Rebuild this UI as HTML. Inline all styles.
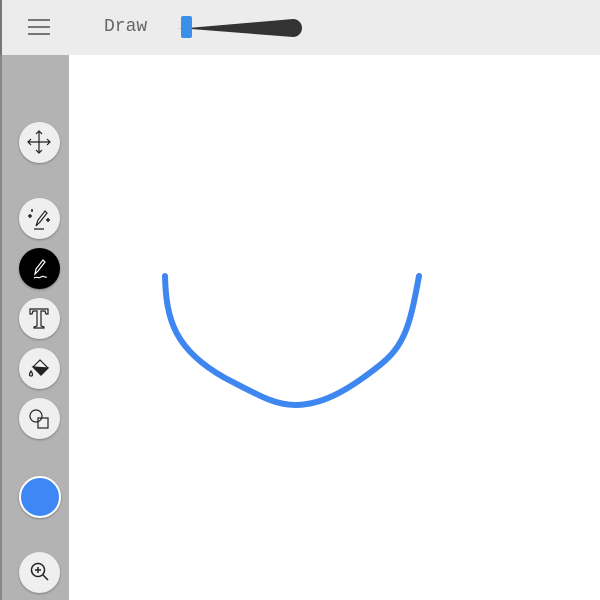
<!DOCTYPE html>
<html><head><style>
body{margin:0;width:600px;height:600px;overflow:hidden;background:#fff;font-family:"Liberation Mono",monospace;position:relative}
#top{position:absolute;left:0;top:0;width:600px;height:55px;background:#ececec;border-left:2px solid #777;box-sizing:border-box}
#side{position:absolute;left:0;top:55px;width:69px;height:545px;background:#b3b3b3;border-left:2px solid #888;box-sizing:border-box}
.b{position:absolute;left:19px;width:41px;height:41px;border-radius:50%;background:#efefef;box-shadow:0 1px 2px rgba(0,0,0,.3)}
.b svg{position:absolute;left:0;top:0}
</style></head><body>
<div id="top">
<div style="position:absolute;left:26px;top:19px;width:22px;height:2px;background:#777;box-shadow:0 7px 0 #777,0 14px 0 #777"></div>
<div style="position:absolute;left:102px;top:17px;font-size:18px;color:#666">Draw</div>
<svg style="position:absolute;left:0;top:0" width="320" height="55"><path d="M176 28 L186 28 L291 19 A9 9 0 0 1 291 37 Z" fill="#333"/><rect x="179" y="16" width="11" height="22" rx="2" fill="#3a8fe8"/></svg>
</div>
<div id="side"></div>
<div class="b" style="top:122px"><svg width="41" height="41" fill="none" stroke="#222" stroke-width="1.2"><path d="M20 9V31M9 20H31M17 12l3-3 3 3M17 28l3 3 3-3M12 17l-3 3 3 3M28 17l3 3-3 3"/></svg></div>
<div class="b" style="top:198px"><svg width="41" height="41" fill="none" stroke="#222" stroke-width="1.2"><path d="M17 28l2-6 7-9 2 2-7 9z M15 31h10"/><path d="M9 18h4M11 16v4M27 22h4M29 20v4M13 11v3" stroke-width="1.5"/></svg></div>
<div class="b" style="top:248px;background:#000"><svg width="41" height="41" fill="none" stroke="#fff" stroke-width="1.2"><path d="M16 26l1-5 7-9 2 2-7 9z M15 30c3-2 5 1 7-1s4 1 6 0"/></svg></div>
<div class="b" style="top:298px"><svg width="41" height="41" fill="none" stroke="#222" stroke-width="1.2"><path d="M11 11h18v5h-2l-1-3h-4v15l3 1v1h-10v-1l3-1V13h-4l-1 3h-2z"/></svg></div>
<div class="b" style="top:348px"><svg width="41" height="41" fill="none" stroke="#222" stroke-width="1.2"><path d="M14 19l7-7 8 8-7 7z"/><path d="M14 19l8 8 7-7z" fill="#222"/><path d="M12 23c-2 3-2 5 0 5s2-2 0-5z"/></svg></div>
<div class="b" style="top:398px"><svg width="41" height="41" fill="none" stroke="#222" stroke-width="1.2"><circle cx="17" cy="18" r="6"/><rect x="19" y="20" width="10" height="10"/></svg></div>
<div class="b" style="top:476px;background:#3f87f5;border:2px solid #fff;width:38px;height:38px;left:19px"></div>
<div class="b" style="top:552px"><svg width="41" height="41" fill="none" stroke="#222" stroke-width="1.5"><circle cx="19" cy="18" r="6.5"/><path d="M19 15v6M16 18h6M24 23l5 5"/></svg></div>
<svg style="position:absolute;left:0;top:0" width="600" height="600"><path d="M165 276 C166 320 175 350 225 378 C260 396 275 405 295 405 C320 405 345 393 380 365 C405 345 410 325 419 276" fill="none" stroke="#3f87f0" stroke-width="6" stroke-linecap="round"/></svg>
</body></html>
